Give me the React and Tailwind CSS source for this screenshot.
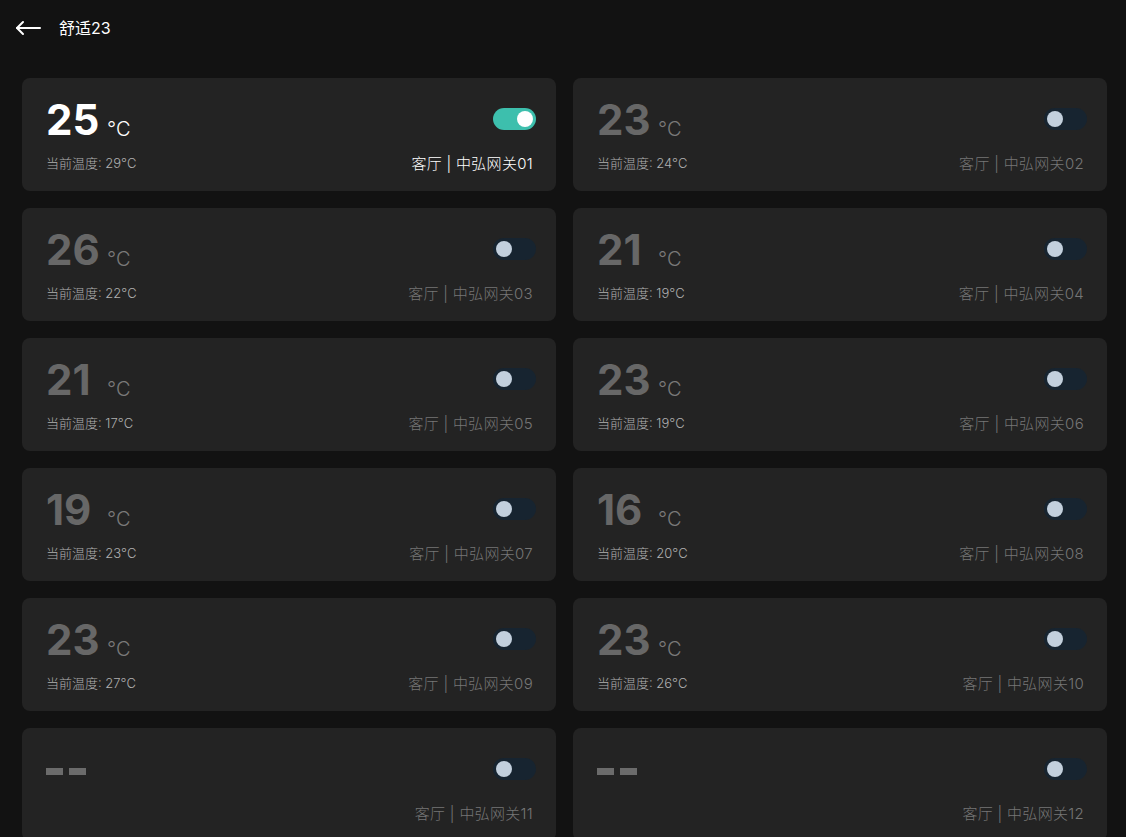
import React from "react";

const cards = [
  { t: "25", cur: "29", name: "01", on: true },
  { t: "23", cur: "24", name: "02" },
  { t: "26", cur: "22", name: "03" },
  { t: "21", cur: "19", name: "04" },
  { t: "21", cur: "17", name: "05" },
  { t: "23", cur: "19", name: "06" },
  { t: "19", cur: "23", name: "07" },
  { t: "16", cur: "20", name: "08" },
  { t: "23", cur: "27", name: "09" },
  { t: "23", cur: "26", name: "10" },
  { t: null, cur: null, name: "11" },
  { t: null, cur: null, name: "12" },
];

function Toggle({ on }) {
  return on ? (
    <div className="w-[43px] h-[22px] rounded-full bg-[#3dbfad] flex items-center justify-end pr-[3px]">
      <div className="w-[16px] h-[16px] rounded-full bg-white" />
    </div>
  ) : (
    <div className="w-[43px] h-[22px] rounded-full bg-[#172430] flex items-center pl-[3px]">
      <div className="w-[16px] h-[16px] rounded-full bg-[#c3d0dd]" />
    </div>
  );
}

function Card({ c }) {
  const on = c.on;
  return (
    <div className="h-[113px] rounded-[8px] bg-[#232323] pl-[24px] pr-[20px] pt-[22px] flex flex-col">
      <div className="flex items-start justify-between h-[42px]">
        {c.t ? (
          <div className="flex items-end">
            <div
              className={`w-[61px] text-[42px] leading-[40px] font-bold ${
                on ? "text-white" : "text-[#676767]"
              }`}
            >
              {c.t}
            </div>
            <div
              className={`text-[20px] leading-[20px] mb-[1px] font-light ${
                on ? "text-white" : "text-[#7a7a7a]"
              }`}
            >
              °C
            </div>
          </div>
        ) : (
          <div className="flex gap-[6px] mt-[18px]">
            <div className="w-[17px] h-[7px] bg-[#6b6b6b]" />
            <div className="w-[17px] h-[7px] bg-[#6b6b6b]" />
          </div>
        )}
        <div className="mt-[8px]">
          <Toggle on={on} />
        </div>
      </div>
      <div className="flex items-center justify-between mt-[12px] h-[20px]">
        <div className="text-[13px] font-light text-[#b0b0b0]">
          {c.cur ? `当前温度: ${c.cur}°C` : ""}
        </div>
        <div
          className={`text-[15px] font-light tracking-[0.3px] pr-[3px] ${
            on ? "text-white" : "text-[#767676]"
          }`}
        >
          客厅 | 中弘网关{c.name}
        </div>
      </div>
    </div>
  );
}

export default function App() {
  return (
    <div
      className="w-[1126px] h-[837px] overflow-hidden bg-[#121212]"
      style={{ fontFamily: "Inter, 'Noto Sans CJK SC', sans-serif" }}
    >
      <div className="h-[56px] flex items-center pl-[15px]">
        <svg width="26" height="16" viewBox="0 0 26 16" fill="none" stroke="white" strokeWidth="2" strokeLinecap="round" strokeLinejoin="round">
          <path d="M25 8H2" />
          <path d="M8 2L2 8l6 6" />
        </svg>
        <div className="ml-[18px] text-[16px] text-white">舒适23</div>
      </div>
      <div className="grid grid-cols-2 gap-x-[17px] gap-y-[17px] pl-[22px] pr-[19px] pt-[22px]">
        {cards.map((c, i) => (
          <Card key={i} c={c} />
        ))}
      </div>
    </div>
  );
}
